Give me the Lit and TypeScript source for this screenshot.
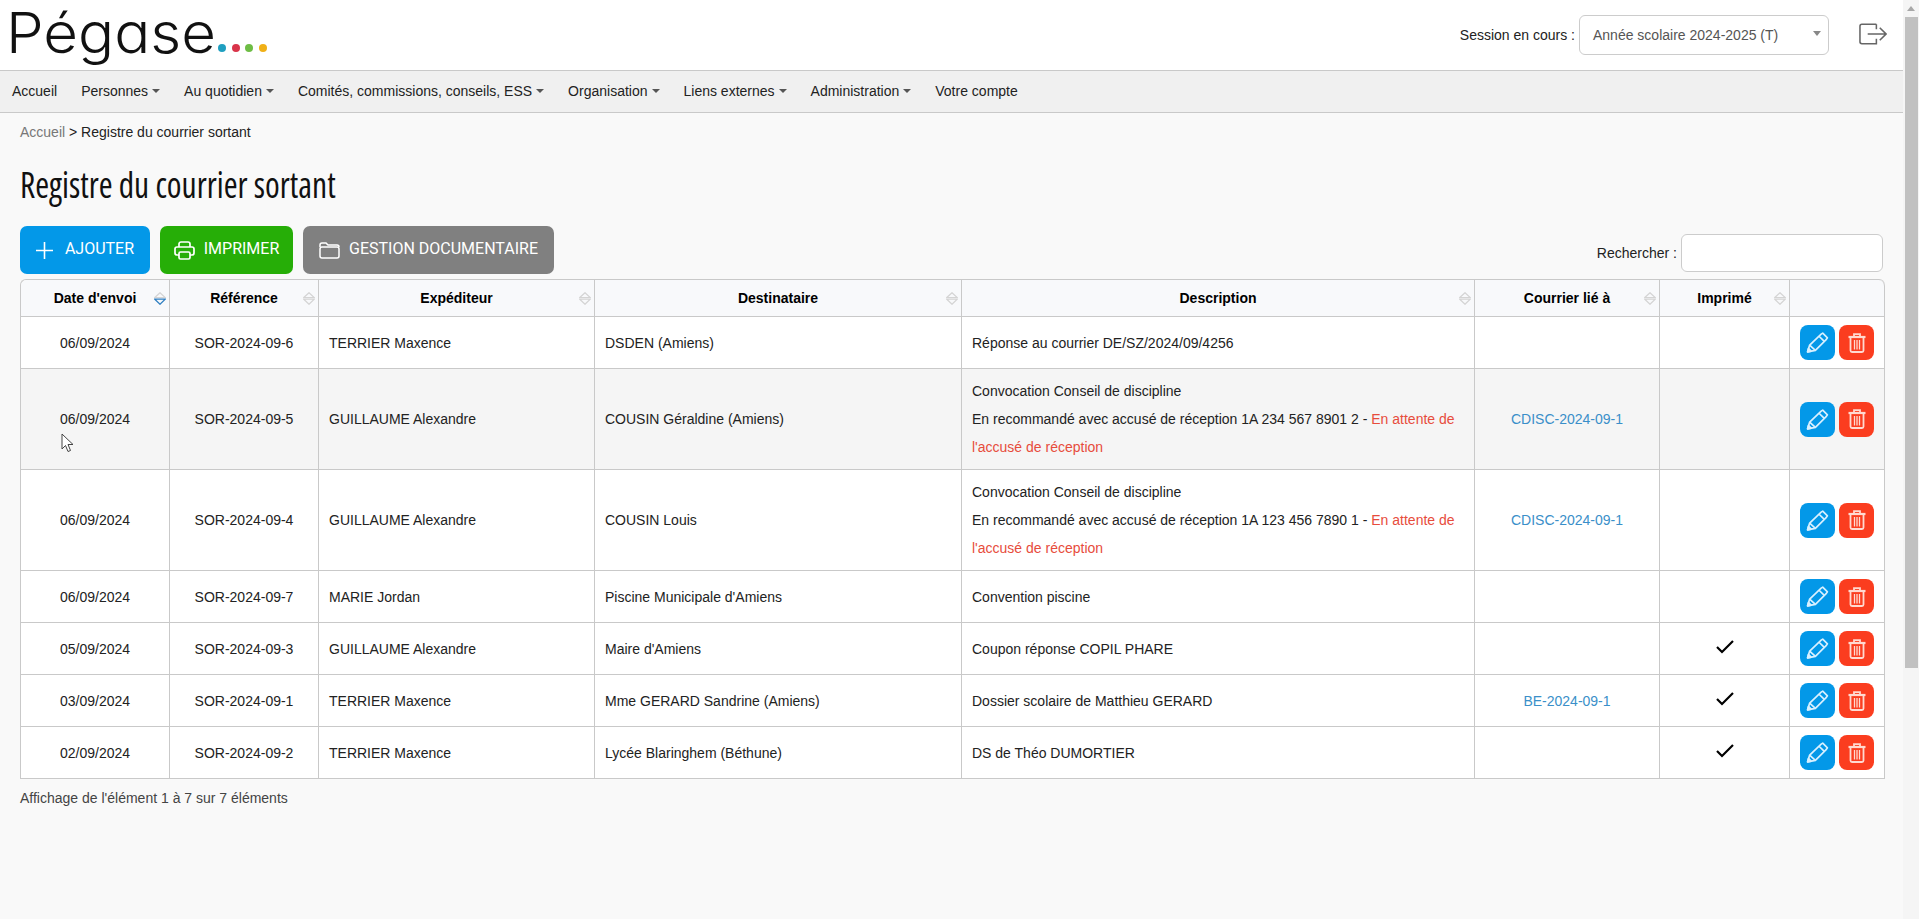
import { LitElement, css, html, nothing } from "lit";
import { customElement } from "lit/decorators.js";

interface Row {
  date: string;
  ref: string;
  from: string;
  to: string;
  desc: string;
  tracking?: string;
  link?: string;
  printed?: boolean;
  hover?: boolean;
}

const NAV: [string, boolean][] = [
  ["Accueil", false],
  ["Personnes", true],
  ["Au quotidien", true],
  ["Comités, commissions, conseils, ESS", true],
  ["Organisation", true],
  ["Liens externes", true],
  ["Administration", true],
  ["Votre compte", false],
];

const COLUMNS = ["Date d'envoi", "Référence", "Expéditeur", "Destinataire", "Description", "Courrier lié à", "Imprimé", ""];
const WIDTHS = [149, 149, 276, 367, 513, 185, 130, 95];

const ROWS: Row[] = [
  { date: "06/09/2024", ref: "SOR-2024-09-6", from: "TERRIER Maxence", to: "DSDEN (Amiens)", desc: "Réponse au courrier DE/SZ/2024/09/4256" },
  {
    date: "06/09/2024",
    ref: "SOR-2024-09-5",
    from: "GUILLAUME Alexandre",
    to: "COUSIN Géraldine (Amiens)",
    desc: "Convocation Conseil de discipline",
    tracking: "1A 234 567 8901 2",
    link: "CDISC-2024-09-1",
    hover: true,
  },
  {
    date: "06/09/2024",
    ref: "SOR-2024-09-4",
    from: "GUILLAUME Alexandre",
    to: "COUSIN Louis",
    desc: "Convocation Conseil de discipline",
    tracking: "1A 123 456 7890 1",
    link: "CDISC-2024-09-1",
  },
  { date: "06/09/2024", ref: "SOR-2024-09-7", from: "MARIE Jordan", to: "Piscine Municipale d'Amiens", desc: "Convention piscine" },
  { date: "05/09/2024", ref: "SOR-2024-09-3", from: "GUILLAUME Alexandre", to: "Maire d'Amiens", desc: "Coupon réponse COPIL PHARE", printed: true },
  { date: "03/09/2024", ref: "SOR-2024-09-1", from: "TERRIER Maxence", to: "Mme GERARD Sandrine (Amiens)", desc: "Dossier scolaire de Matthieu GERARD", link: "BE-2024-09-1", printed: true },
  { date: "02/09/2024", ref: "SOR-2024-09-2", from: "TERRIER Maxence", to: "Lycée Blaringhem (Béthune)", desc: "DS de Théo DUMORTIER", printed: true },
];

const pencil = html`<svg width="23" height="21" viewBox="0 0 22 20" fill="none" stroke="#d8f0ff" stroke-width="1.6" stroke-linejoin="round">
  <path d="M1.5 19l2-6.500L14.500 2l1.500-1 4.500 4.500-1 1.500L9 17.500z" />
  <path d="M12.500 4l5 5M3.500 12.500l5.500 5" />
  <path d="M1.500 19l.8-3.400 2.600 2.600z" fill="#d8f0ff" />
</svg>`;

const trash = html`<svg width="18" height="20" viewBox="0 0 18 20" fill="none" stroke="#ffd9d0" stroke-width="1.8">
  <path d="M.5 4h17" stroke-width="2.200" />
  <path d="M6 3V1.200h6V3" />
  <path d="M2.500 5v12.500q0 1.500 1.500 1.500h10q1.500 0 1.500-1.500V5" />
  <path d="M6.500 7v9.500M9 7v9.500M11.500 7v9.500" stroke-width="1.300" />
</svg>`;

const check = html`<svg class="check" width="18" height="14" viewBox="0 0 18 14" fill="none" stroke="#000" stroke-width="2.200">
  <path d="M1 7l5 5L17 1" />
</svg>`;

@customElement("app-root")
export class AppRoot extends LitElement {
  static override styles = css`
    :host {
      display: flex;
      height: 919px;
      overflow: hidden;
      background: #f9f9f9;
      color: #222;
      font-family: "Liberation Sans", Arial, sans-serif;
      font-size: 14px;
      line-height: 20px;
    }

    .page {
      flex: 1;
      min-width: 0;
    }

    .top {
      display: flex;
      align-items: center;
      height: 70px;
      background: #fff;
      border-bottom: 1px solid #c9c9c9;
      padding: 0 16px 0 6px;
    }

    .logo {
      display: flex;
      align-items: flex-end;
      height: 70px;
      flex: 1;
    }

    .logo-text {
      display: inline-block;
      width: 209px;
      font-family: Inter, "Liberation Sans", sans-serif;
      font-feature-settings: "cv11";
      font-weight: 300;
      font-size: 56px;
      line-height: 70px;
      color: #111;
      margin-bottom: 2px;
      transform: scaleX(1.07);
      transform-origin: left center;
    }

    .dots {
      display: flex;
      gap: 5.5px;
      margin: 0 0 18px 3px;
    }

    .dot {
      width: 8px;
      height: 8px;
      border-radius: 50%;
    }

    .session {
      margin-right: 4px;
    }

    .select {
      display: flex;
      align-items: center;
      justify-content: space-between;
      box-sizing: border-box;
      width: 250px;
      height: 40px;
      padding: 0 7px 0 13px;
      margin-right: 30px;
      background: #fff;
      border: 1px solid #ccc;
      border-radius: 6px;
      color: #555;
    }

    .select i {
      border: 4px solid transparent;
      border-top: 5px solid #888;
      border-bottom: 0;
      margin-top: -4px;
    }

    .logout {
      display: block;
      margin-top: -2px;
    }

    nav {
      display: flex;
      box-sizing: border-box;
      height: 42px;
      padding-bottom: 1px;
      align-items: center;
      background: #f0f0f0;
      border-bottom: 1px solid #c9c9c9;
    }

    nav span {
      padding: 0 12px;
      display: flex;
      align-items: center;
    }

    .caret {
      border: 4px solid transparent;
      border-top-color: #555;
      border-bottom: 0;
      margin-left: 4px;
    }

    .content {
      padding: 9px 18px 0 20px;
    }

    .crumbs a {
      color: #777;
    }

    h1 {
      margin: 17px 0 0;
      font-family: "Open Sans", sans-serif;
      font-stretch: 75%;
      font-weight: 400;
      font-size: 37px;
      line-height: 50px;
      color: #111;
      transform: scaleX(0.905);
      transform-origin: left center;
    }

    .toolbar {
      display: flex;
      justify-content: space-between;
      align-items: flex-end;
      margin-top: 17px;
    }

    .actions {
      display: flex;
      gap: 10px;
    }

    .btn {
      display: flex;
      align-items: center;
      justify-content: center;
      box-sizing: border-box;
      height: 48px;
      padding-bottom: 3px;
      border-radius: 7px;
      color: #fff;
      font-family: Roboto, sans-serif;
      font-size: 16px;
    }

    .btn svg {
      margin: 3px 9px 0 0;
    }

    .btn svg.plus {
      margin-right: 12px;
    }

    .blue {
      width: 130px;
      background: #0398e8;
    }

    .green {
      width: 133px;
      background: #26ae07;
    }

    .grey {
      width: 251px;
      background: #808080;
    }

    .search {
      display: flex;
      align-items: center;
      gap: 4px;
      margin: 0 2px 2px 0;
    }

    .input {
      box-sizing: border-box;
      width: 202px;
      height: 38px;
      background: #fff;
      border: 1px solid #ccc;
      border-radius: 6px;
    }

    .table {
      box-sizing: border-box;
      width: 1865px;
      margin-top: 5px;
      table-layout: fixed;
      border-collapse: separate;
      border-spacing: 0;
      border-left: 1px solid #c9c9c9;
      border-top: 1px solid #c9c9c9;
      border-top-left-radius: 6px;
      border-top-right-radius: 6px;
    }

    th,
    td {
      border-right: 1px solid #c9c9c9;
      border-bottom: 1px solid #c9c9c9;
      padding: 8px 10px;
      text-align: left;
      line-height: 28px;
    }

    th {
      position: relative;
      height: 37px;
      box-sizing: border-box;
      padding: 0 10px;
      background: #f8f9fb;
      text-align: center;
      color: #000;
    }

    th:first-child {
      border-top-left-radius: 6px;
    }

    th:last-child {
      border-top-right-radius: 6px;
    }

    td {
      background: #fff;
    }

    tr.hover td {
      background: #f5f5f5;
    }

    td.center {
      text-align: center;
    }

    td.link {
      color: #3a8fc9;
    }

    .late {
      color: #e74c3c;
    }

    .sort {
      position: absolute;
      right: 3px;
      top: 12px;
    }

    .check {
      display: block;
      margin: -3px auto 0;
    }

    .row-actions {
      display: flex;
      gap: 4px;
    }

    .square {
      display: flex;
      align-items: center;
      justify-content: center;
      width: 35px;
      height: 35px;
      border-radius: 8px;
    }

    .square.edit {
      background: #0398e8;
    }

    .square.del {
      background: #fb3d1f;
    }

    .count {
      margin-top: 9px;
      color: #444;
    }

    .cursor {
      position: absolute;
      left: 61px;
      top: 433px;
    }

    .scrollbar {
      flex: none;
      box-sizing: border-box;
      width: 16px;
      padding: 17px 1px 251px 2px;
      background: #f5f5f5;
      position: relative;
    }

    .scrollbar::before {
      content: "";
      position: absolute;
      left: 4px;
      top: 6px;
      border: 4px solid transparent;
      border-bottom: 5px solid #a8a8a8;
      border-top: 0;
    }

    .thumb {
      height: 100%;
      background: #c1c1c1;
    }
  `;

  private sortIcon(active: boolean) {
    const up = "#d4d4d4";
    const down = active ? "#2f7fc1" : "#d4d4d4";
    return html`<svg class="sort" width="12" height="13" viewBox="0 0 12 13" fill="none" stroke-width="1.200">
      <path d="M.8 5.500L6 .7l5.200 4.800z" stroke=${up} />
      <path d="M.8 7.200L6 12.300l5.200-5.100z" stroke=${down} />
    </svg>`;
  }

  private renderRow(r: Row) {
    return html`<tr class=${r.hover ? "hover" : ""}>
      <td class="center">${r.date}</td>
      <td class="center">${r.ref}</td>
      <td>${r.from}</td>
      <td>${r.to}</td>
      <td>
        ${r.desc}
        ${r.tracking
          ? html`<br />En recommandé avec accusé de réception ${r.tracking} -
              <span class="late">En attente de</span><br /><span class="late">l'accusé de réception</span>`
          : nothing}
      </td>
      <td class="center link">${r.link ?? ""}</td>
      <td>${r.printed ? check : nothing}</td>
      <td>
        <div class="row-actions">
          <div class="square edit">${pencil}</div>
          <div class="square del">${trash}</div>
        </div>
      </td>
    </tr>`;
  }

  override render() {
    return html`
      <div class="page">
        <header class="top">
          <div class="logo">
            <span class="logo-text">Pégase</span>
            <div class="dots">
              <div class="dot" style="background:#1f9fc0"></div>
              <div class="dot" style="background:#d9344a"></div>
              <div class="dot" style="background:#6ebd45"></div>
              <div class="dot" style="background:#f0b017"></div>
            </div>
          </div>
          <span class="session">Session en cours :</span>
          <div class="select">Année scolaire 2024-2025 (T)<i></i></div>
          <svg class="logout" width="28" height="22" viewBox="0 0 29 22" fill="none" stroke="#666" stroke-width="1.600">
            <path d="M18 1H3a2 2 0 0 0-2 2v16a2 2 0 0 0 2 2h15v-5M18 6V1" />
            <path d="M9 11h18.500M21.500 4.500L28 11l-6.500 6.500" />
          </svg>
        </header>
        <nav>
          ${NAV.map(([label, menu]) => html`<span>${label}${menu ? html`<i class="caret"></i>` : nothing}</span>`)}
        </nav>
        <main class="content">
          <div class="crumbs"><a>Accueil</a> &gt; Registre du courrier sortant</div>
          <h1>Registre du courrier sortant</h1>
          <div class="toolbar">
            <div class="actions">
              <div class="btn blue">
                <svg class="plus" width="17" height="17" viewBox="0 0 17 17" stroke="#fff" stroke-width="1.600"><path d="M8.500 0v17M0 8.500h17" /></svg>
                AJOUTER
              </div>
              <div class="btn green">
                <svg width="21" height="19" viewBox="0 0 21 19" fill="none" stroke="#fff" stroke-width="1.700">
                  <path d="M5 6V3a2 2 0 0 1 2-2h7a2 2 0 0 1 2 2v3" />
                  <path d="M5 14H3a2 2 0 0 1-2-2V8a2 2 0 0 1 2-2h15a2 2 0 0 1 2 2v4a2 2 0 0 1-2 2h-2" />
                  <rect x="5" y="11" width="11" height="7" rx="1.500" />
                </svg>
                IMPRIMER
              </div>
              <div class="btn grey">
                <svg width="21" height="17" viewBox="0 0 21 17" fill="none" stroke="#fff" stroke-width="1.500">
                  <path d="M1 5V3a2 2 0 0 1 2-2h4l2 2h9a2 2 0 0 1 2 2" />
                  <path d="M3 5h15a2 2 0 0 1 2 2v7a2 2 0 0 1-2 2H3a2 2 0 0 1-2-2V7a2 2 0 0 1 2-2z" />
                </svg>
                GESTION DOCUMENTAIRE
              </div>
            </div>
            <div class="search">Rechercher :<div class="input"></div></div>
          </div>
          <table class="table">
            <colgroup>${WIDTHS.map((w) => html`<col style="width:${w}px" />`)}</colgroup>
            <thead>
              <tr>
                ${COLUMNS.map((c, i) => html`<th>${c}${c ? this.sortIcon(i === 0) : nothing}</th>`)}
              </tr>
            </thead>
            <tbody>${ROWS.map((r) => this.renderRow(r))}</tbody>
          </table>
          <div class="count">Affichage de l'élément 1 à 7 sur 7 éléments</div>
        </main>
        <svg class="cursor" width="13" height="20" viewBox="0 0 13 20" fill="#fff" stroke="#444" stroke-width="1">
          <path d="M1 1v15l3.500-3.500 2.500 6 2.500-1-2.500-6H12z" />
        </svg>
      </div>
      <div class="scrollbar"><div class="thumb"></div></div>
    `;
  }
}

declare global {
  interface HTMLElementTagNameMap {
    "app-root": AppRoot;
  }
}
